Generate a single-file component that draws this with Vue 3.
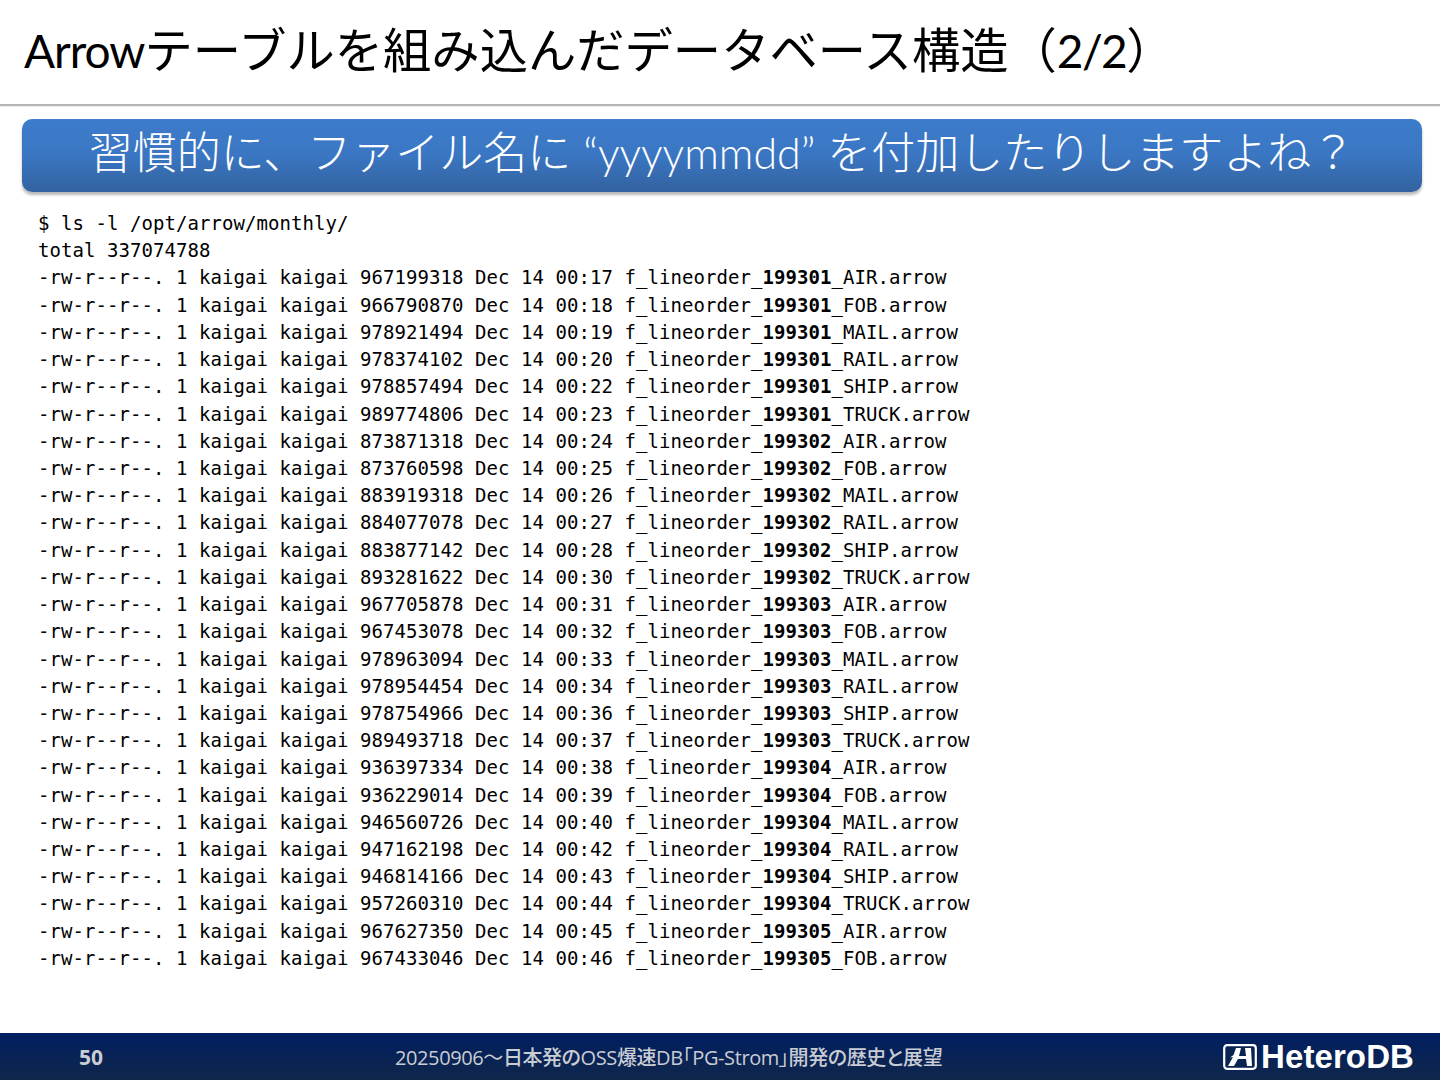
<script setup>
const rows = [
  ['967199318','00:17','199301','AIR'],['966790870','00:18','199301','FOB'],['978921494','00:19','199301','MAIL'],
  ['978374102','00:20','199301','RAIL'],['978857494','00:22','199301','SHIP'],['989774806','00:23','199301','TRUCK'],
  ['873871318','00:24','199302','AIR'],['873760598','00:25','199302','FOB'],['883919318','00:26','199302','MAIL'],
  ['884077078','00:27','199302','RAIL'],['883877142','00:28','199302','SHIP'],['893281622','00:30','199302','TRUCK'],
  ['967705878','00:31','199303','AIR'],['967453078','00:32','199303','FOB'],['978963094','00:33','199303','MAIL'],
  ['978954454','00:34','199303','RAIL'],['978754966','00:36','199303','SHIP'],['989493718','00:37','199303','TRUCK'],
  ['936397334','00:38','199304','AIR'],['936229014','00:39','199304','FOB'],['946560726','00:40','199304','MAIL'],
  ['947162198','00:42','199304','RAIL'],['946814166','00:43','199304','SHIP'],['957260310','00:44','199304','TRUCK'],
  ['967627350','00:45','199305','AIR'],['967433046','00:46','199305','FOB'],
]
</script>

<template>
  <div class="slide">
    <header class="title"><h1><span class="lat">Arrow</span>テーブルを組み込んだデータベース構造（<span class="lat2">2/2</span>）</h1></header>
    <div class="band">習慣的に、ファイル名に <span class="ylat">“yyyymmdd”</span> を付加したりしますよね？</div>
    <div class="term">
      <div class="line">$ ls -l /opt/arrow/monthly/</div>
      <div class="line">total 337074788</div>
      <div class="line" v-for="r in rows" :key="r[0]">-rw-r--r--. 1 kaigai kaigai {{ r[0] }} Dec 14 {{ r[1] }} f_lineorder_<b>{{ r[2] }}</b>_{{ r[3] }}.arrow</div>
    </div>
    <footer class="foot">
      <span class="num">50</span>
      <span class="talk">20250906～<b>日本発の</b>OSS<b>爆速</b>DB「PG-Strom」<b>開発の歴史と展望</b></span>
      <span class="logo">
        <svg width="34" height="26" viewBox="0 0 34 26">
          <rect x="1.2" y="1.2" width="31.6" height="23.6" rx="3" fill="#0a2350" stroke="#fff" stroke-width="2.2"/>
          <path d="M13 4h5l-2 8h7l-1-8h6l1 18h-5l-1-7h-8l-4 7H5l5-9-3 .5 3.5-2.5z" fill="#fff"/>
        </svg>
        <span>HeteroDB</span>
      </span>
    </footer>
  </div>
</template>

<style>
html, body { margin: 0; background: #fff; }
</style>

<style scoped>
.slide {
  width: 1440px;
  height: 1080px;
  display: flex;
  flex-direction: column;
  background: #fff;
  overflow: hidden;
}
.title {
  flex: none;
  height: 85px;
  padding: 19px 0 0 24px;
  border-bottom: 2px solid #b5b5b5;
  box-shadow: 0 1px 1px rgba(0, 0, 0, .08);
}
h1 {
  margin: 0;
  font: 400 48.3px/60px Lato, "Noto Sans CJK JP", sans-serif;
  color: #000;
  white-space: nowrap;
}
.lat { font-size: 46px; letter-spacing: -1px; }
.lat2 { font-size: 46px; letter-spacing: -1.6px; }
.band {
  flex: none;
  margin: 13px 18px 0 22px;
  height: 73px;
  border-radius: 10px;
  background: linear-gradient(#3d7ccc, #3a76c2 50%, #33629f);
  box-shadow: 0 3px 3px rgba(0, 0, 0, .28);
  color: #fff;
  font: 300 44px/67px Lato, "Noto Sans CJK JP", sans-serif;
  text-align: center;
  white-space: nowrap;
}
.ylat { font-size: 43px; font-weight: 300; letter-spacing: 0; }
.term {
  flex: 1;
  padding: 18px 0 0 38px;
  font: 400 19px/27.23px "DejaVu Sans Mono", monospace;
  letter-spacing: .06px;
  color: #000;
  white-space: pre;
}
.line { height: 27.23px; }
.line b { font-weight: 700; }
.foot {
  flex: none;
  height: 47px;
  display: flex;
  align-items: center;
  background: linear-gradient(#001e62, #10274a);
  color: #c9ccd3;
}
.num {
  margin-left: 79px;
  width: 316px;
  font: 700 21px "Open Sans", sans-serif;
}
.talk {
  width: 748px;
  font: 400 20px "Open Sans", "Noto Sans CJK JP", sans-serif;
  font-feature-settings: "palt";
  letter-spacing: -.4px;
  white-space: nowrap;
}
.talk b { font-weight: 500; }
.logo {
  margin-left: 80px;
  display: flex;
  align-items: center;
  gap: 4px;
  color: #fff;
  font: 700 33px "Liberation Sans", sans-serif;
  letter-spacing: .1px;
}
</style>
